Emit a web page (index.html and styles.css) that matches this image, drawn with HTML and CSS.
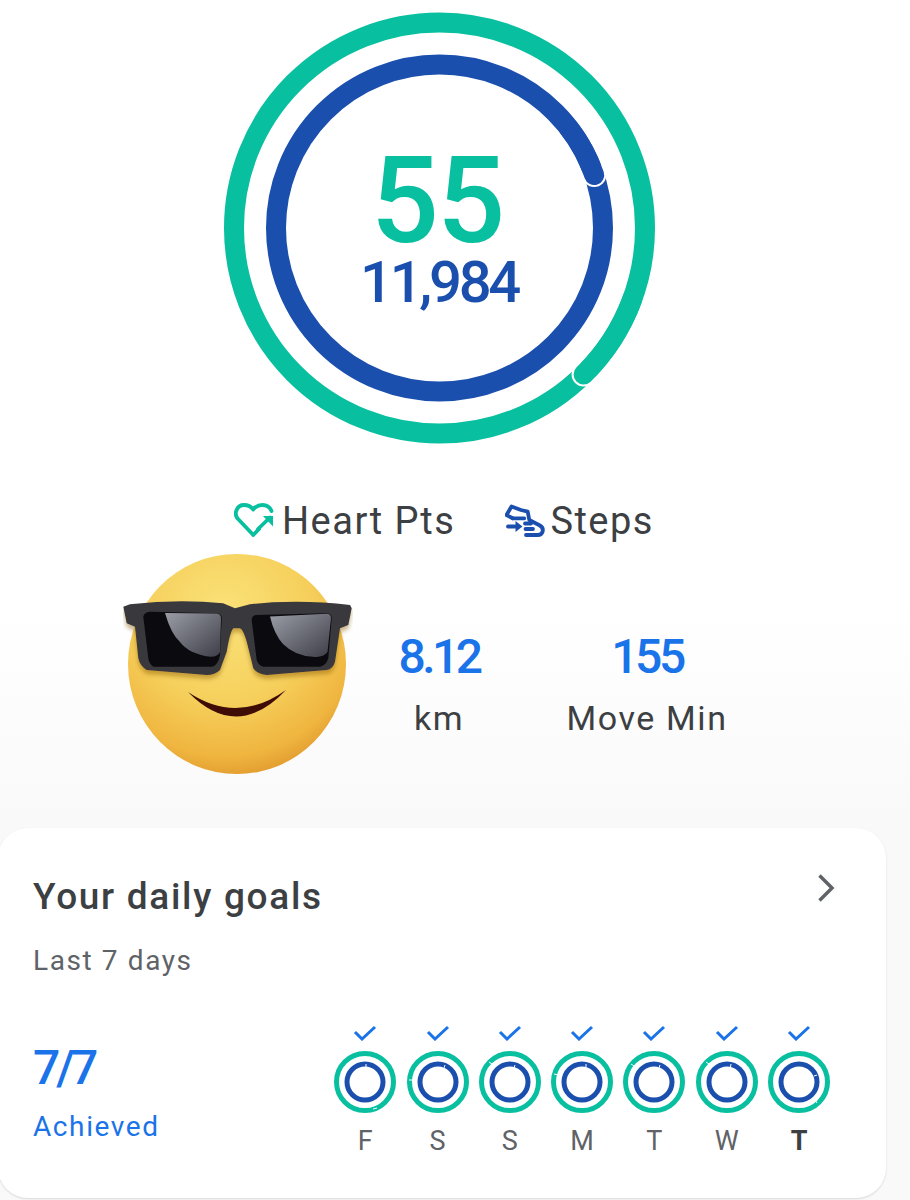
FILE: index.html
```html
<!DOCTYPE html>
<html lang="en">
<head>
<meta charset="utf-8">
<title>Fit</title>
<link rel="stylesheet" href="styles.css">
</head>
<body>
<main class="page">
  <section class="hero">
    <svg class="hero-rings" viewBox="0 0 432 432" width="432" height="432">
      <g transform="translate(-224 -12)">
        <circle class="ring-green" cx="439.5" cy="228" r="205.5" stroke-width="20"/>
        <circle class="ring-blue" cx="439.5" cy="228" r="163.5" stroke-width="20"/>
        <circle class="halo" cx="583.6" cy="374.5" r="12"/>
        <path class="ring-green cap" stroke-width="20" d="M632.6 298.3A205.5 205.5 0 0 1 583.6 374.5"/>
        <circle class="halo" cx="594.2" cy="175" r="12"/>
        <path class="ring-blue cap" stroke-width="20" d="M568.9 128A163.5 163.5 0 0 1 594.2 175"/>
      </g>
    </svg>
    <div class="hero-values">
      <div class="hero-points">55</div>
      <div class="hero-steps">11,984</div>
    </div>
  </section>

  <section class="legend">
    <div class="legend-item">
      <svg class="legend-icon" viewBox="0 0 40 36" width="40" height="36">
        <path class="icon-green" d="M25 26L19.300 32L3.600 15.500C-.5 10.500 3 2 10 2C14 2 17 3.500 19.300 6.500C21.500 3.500 24.500 2 28.500 2C33 2 36 4.500 37.500 8"/>
        <path class="icon-green" d="M24 26L36 14.500"/>
        <path class="fill-green" d="M29 13H39V23.500Z"/>
      </svg>
      <span>Heart Pts</span>
    </div>
    <div class="legend-item legend-item-tight">
      <svg class="legend-icon" viewBox="0 0 40 36" width="40" height="36">
        <path class="icon-blue" d="M7.700 15.300L1.500 12L6.500 3.500L16 7L22.700 8.700L24.300 17L34 22C37 23.500 38.500 26 37.500 29C36.500 31.500 35 32 33 32H21"/>
        <path class="icon-blue" d="M7.700 15.300H19.300M20 20.500H26M20.500 26H28"/>
        <path class="icon-blue" d="M3 23.500H13"/>
        <path class="fill-blue" d="M10.500 18L17.500 23.500L10.500 29Z"/>
      </svg>
      <span>Steps</span>
    </div>
  </section>

  <section class="stats">
    <svg class="emoji" viewBox="0 0 230 224" width="230" height="224">
      <defs>
        <radialGradient id="face" cx="44%" cy="28%" r="78%">
          <stop offset="0" stop-color="#fae27a"/>
          <stop offset=".5" stop-color="#f6d05c"/>
          <stop offset=".82" stop-color="#efb53f"/>
          <stop offset="1" stop-color="#dd9228"/>
        </radialGradient>
        <linearGradient id="lens" x1="0" y1="0" x2="1" y2="1">
          <stop offset="0" stop-color="#9a9ca6"/>
          <stop offset="1" stop-color="#3d3e47"/>
        </linearGradient>
        <filter id="soft" x="-10%" y="-10%" width="120%" height="130%">
          <feDropShadow dx="0" dy="4" stdDeviation="2" flood-color="#8a5a10" flood-opacity=".45"/>
        </filter>
      </defs>
      <ellipse cx="114" cy="112" rx="109" ry="110" fill="url(#face)"/>
      <path class="frame" filter="url(#soft)" d="M.3 54.700L7 52.300Q55 47 100 51.300L112 56.300L127 52.300Q175 47 227 53L228.700 56.300L225.300 73L217 76.300L212 109.700Q210 117 203.700 118L143.700 123Q134 122 130.300 116.300L125.300 96Q121 78 117 76.300H110.300Q107 80 103.700 99.700L97 118Q92 123 83.700 123L23.700 118Q17 114 15.300 106.300L12 74.700L3.700 71.300Z"/>
      <path class="lens" d="M20.300 64.700Q21 60 27 59.700L93.700 61.300Q98.700 62 98.700 66.300L97 103Q95 114 88.700 114.700H30.300Q26 112 25.300 106.300Z"/>
      <path fill="url(#lens)" d="M42 61L93.700 61.500Q98 62 98 66.300L97 100Q95 105 87 104.700Q66 102 57 90Q48 82 42 61Z"/>
      <path class="lens" d="M128.700 68Q129 63 133.700 63L203.700 61.300Q208.700 62 208.700 66.300L205.300 106.300Q203 114 197 114.700H140.300Q135 113 133.700 108Z"/>
      <path fill="url(#lens)" d="M147 64.500L203.700 61.800Q208 62 208 66.300L204.500 100Q200 106 190 104.700Q172 104 160 92Q151 82 147 64.500Z"/>
      <path class="mouth" d="M65 140Q114 190 163 138Q114 173 65 140Z"/>
    </svg>
    <div class="stat">
      <div class="stat-value">8.12</div>
      <div class="stat-label">km</div>
    </div>
    <div class="stat stat-wide">
      <div class="stat-value">155</div>
      <div class="stat-label">Move Min</div>
    </div>
  </section>

  <section class="card">
    <div class="card-head">
      <h2 class="card-title">Your daily goals</h2>
      <svg class="chevron" viewBox="0 0 18 30" width="18" height="30"><path d="M2.500 2.500L15 15L2.500 27.500"/></svg>
    </div>
    <p class="card-sub">Last 7 days</p>
    <div class="card-body">
      <div class="summary">
        <div class="summary-value">7/7</div>
        <div class="summary-label">Achieved</div>
      </div>
      <div class="week">
        <div class="day">
          <svg class="check" viewBox="0 0 24 16" width="24" height="16"><path d="M2 7L9 14L22 2"/></svg>
          <svg class="mini" viewBox="0 0 64 64" width="64" height="64"><circle class="ring-green" cx="32" cy="32" r="28.500" stroke-width="5"/><circle class="ring-blue" cx="32" cy="32" r="18" stroke-width="5"/><path class="tick" d="M40 59L44 58"/><path class="tick" d="M33 14V17"/></svg>
          <span class="day-name">F</span>
        </div>
        <div class="day">
          <svg class="check" viewBox="0 0 24 16" width="24" height="16"><path d="M2 7L9 14L22 2"/></svg>
          <svg class="mini" viewBox="0 0 64 64" width="64" height="64"><circle class="ring-green" cx="32" cy="32" r="28.500" stroke-width="5"/><circle class="ring-blue" cx="32" cy="32" r="18" stroke-width="5"/><path class="tick" d="M3 30H7"/><path class="tick" d="M39 15L38 18"/></svg>
          <span class="day-name">S</span>
        </div>
        <div class="day">
          <svg class="check" viewBox="0 0 24 16" width="24" height="16"><path d="M2 7L9 14L22 2"/></svg>
          <svg class="mini" viewBox="0 0 64 64" width="64" height="64"><circle class="ring-green" cx="32" cy="32" r="28.500" stroke-width="5"/><circle class="ring-blue" cx="32" cy="32" r="18" stroke-width="5"/><path class="tick" d="M11 12L14 14"/><path class="tick" d="M37 15L36 18"/></svg>
          <span class="day-name">S</span>
        </div>
        <div class="day">
          <svg class="check" viewBox="0 0 24 16" width="24" height="16"><path d="M2 7L9 14L22 2"/></svg>
          <svg class="mini" viewBox="0 0 64 64" width="64" height="64"><circle class="ring-green" cx="32" cy="32" r="28.500" stroke-width="5"/><circle class="ring-blue" cx="32" cy="32" r="18" stroke-width="5"/><path class="tick" d="M4 24L8 25"/><path class="tick" d="M36 14V17"/></svg>
          <span class="day-name">M</span>
        </div>
        <div class="day">
          <svg class="check" viewBox="0 0 24 16" width="24" height="16"><path d="M2 7L9 14L22 2"/></svg>
          <svg class="mini" viewBox="0 0 64 64" width="64" height="64"><circle class="ring-green" cx="32" cy="32" r="28.500" stroke-width="5"/><circle class="ring-blue" cx="32" cy="32" r="18" stroke-width="5"/><path class="tick" d="M9 14L12 16"/><path class="tick" d="M38 15L37 18"/></svg>
          <span class="day-name">T</span>
        </div>
        <div class="day">
          <svg class="check" viewBox="0 0 24 16" width="24" height="16"><path d="M2 7L9 14L22 2"/></svg>
          <svg class="mini" viewBox="0 0 64 64" width="64" height="64"><circle class="ring-green" cx="32" cy="32" r="28.500" stroke-width="5"/><circle class="ring-blue" cx="32" cy="32" r="18" stroke-width="5"/><path class="tick" d="M11 12L14 14"/><path class="tick" d="M36 14L35.500 17"/></svg>
          <span class="day-name">W</span>
        </div>
        <div class="day">
          <svg class="check" viewBox="0 0 24 16" width="24" height="16"><path d="M2 7L9 14L22 2"/></svg>
          <svg class="mini" viewBox="0 0 64 64" width="64" height="64"><circle class="ring-green" cx="32" cy="32" r="28.500" stroke-width="5"/><circle class="ring-blue" cx="32" cy="32" r="18" stroke-width="5"/><path class="tick" d="M50 53L48 50"/><path class="tick" d="M47 26L50 25"/></svg>
          <span class="day-name day-today">T</span>
        </div>
      </div>
    </div>
  </section>
</main>
</body>
</html>
```

FILE: styles.css
```css
* { box-sizing: border-box; }

html, body {
  margin: 0;
  padding: 0;
  height: 1200px;
  overflow: hidden;
}

body {
  background: linear-gradient(#fff 0, #fff 610px, #f9f9fa 830px, #f9f9fa 100%);
  font-family: Roboto, "Liberation Sans", sans-serif;
  color: #3c4043;
}

.page {
  display: flex;
  flex-direction: column;
  width: 910px;
  height: 1200px;
}

/* Rings */
.hero {
  display: grid;
  width: 432px;
  height: 432px;
  margin: 12px 0 0 224px;
  place-items: center;
}

.hero-rings, .hero-values { grid-area: 1 / 1; }

.hero-rings { display: block; }

.ring-green, .ring-blue { fill: none; }
.ring-green { stroke: #08bf9f; }
.ring-blue { stroke: #1b4fae; }
.cap { stroke-linecap: round; }
.halo { fill: #fff; }

.hero-values {
  display: flex;
  flex-direction: column;
  align-items: center;
  padding-top: 10px;
}

.hero-points {
  padding-right: 6px;
  font-size: 120px;
  font-weight: 500;
  line-height: 98px;
  letter-spacing: -2px;
  color: #08bf9f;
}

.hero-steps {
  padding-right: 2px;
  font-size: 58px;
  font-weight: 500;
  line-height: 64px;
  letter-spacing: -3.300px;
  color: #1b4fae;
}

/* Legend */
.legend {
  display: flex;
  align-items: center;
  gap: 50px;
  margin: 54px 0 0 234px;
  height: 46px;
  font-size: 38px;
  letter-spacing: 1.500px;
}

.legend-item {
  display: flex;
  align-items: center;
  gap: 8px;
}

.legend-item-tight { gap: 5px; }

.legend-icon { display: block; flex: none; }

.icon-green, .icon-blue {
  fill: none;
  stroke-width: 3.800;
  stroke-linecap: round;
  stroke-linejoin: round;
}
.icon-green { stroke: #08bf9f; }
.icon-blue { stroke: #1b4fae; }
.fill-green { fill: #08bf9f; }
.fill-blue { fill: #1b4fae; }

/* Stats */
.stats {
  display: flex;
  align-items: center;
  margin: 8px 0 0 123px;
  height: 224px;
}

.emoji { display: block; flex: none; }
.frame { fill: #38383c; }
.lens { fill: #0a0a0f; }
.mouth { fill: #3f0c06; }

.stat {
  display: flex;
  flex-direction: column;
  align-items: center;
  width: 172px;
  margin-top: 38px;
}

.stat-wide { width: 244px; }

.stat-value {
  font-size: 48px;
  font-weight: 500;
  line-height: 56px;
  letter-spacing: -3.500px;
  color: #1a73e8;
}

.stat-label {
  margin-top: 13px;
  font-size: 34px;
  line-height: 40px;
  letter-spacing: 1.600px;
}

/* Card */
.card {
  width: 888px;
  height: 370px;
  margin: 52px 0 0 -2px;
  padding: 44px 51px 0 35px;
  background: #fff;
  border-radius: 30px;
  box-shadow: 0 1px 2px rgba(60, 64, 67, .18);
}

.card-head {
  display: flex;
  align-items: flex-start;
  justify-content: space-between;
}

.card-title {
  margin: 0;
  font-size: 37px;
  font-weight: 500;
  line-height: 50px;
  letter-spacing: 1.700px;
}

.chevron { display: block; margin-top: 1px; }
.chevron path {
  fill: none;
  stroke: #5f6368;
  stroke-width: 3.500;
}

.card-sub {
  margin: 22px 0 0;
  font-size: 28px;
  line-height: 34px;
  letter-spacing: 1.600px;
  color: #5f6368;
}

.card-body {
  display: flex;
  align-items: flex-start;
  justify-content: space-between;
  margin-top: 47px;
}

.summary { margin-top: 15px; }

.summary-value {
  font-size: 48px;
  font-weight: 500;
  line-height: 56px;
  letter-spacing: -4px;
  color: #1a73e8;
}

.summary-label {
  margin-top: 14px;
  font-size: 28px;
  line-height: 34px;
  letter-spacing: 1.600px;
  color: #1a73e8;
}

.week {
  display: grid;
  grid-template-columns: repeat(7, 64px);
  column-gap: 8.300px;
  margin-right: 4px;
}

.day {
  display: flex;
  flex-direction: column;
  align-items: center;
}

.check { display: block; }
.check path {
  fill: none;
  stroke: #1a73e8;
  stroke-width: 3;
}

.mini { display: block; margin-top: 9px; }

.tick {
  fill: none;
  stroke: #fff;
  stroke-width: 1;
}

.day-name {
  margin-top: 11px;
  font-size: 27px;
  line-height: 32px;
  color: #5f6368;
}

.day-today {
  font-weight: 700;
  color: #3c4043;
}
```
